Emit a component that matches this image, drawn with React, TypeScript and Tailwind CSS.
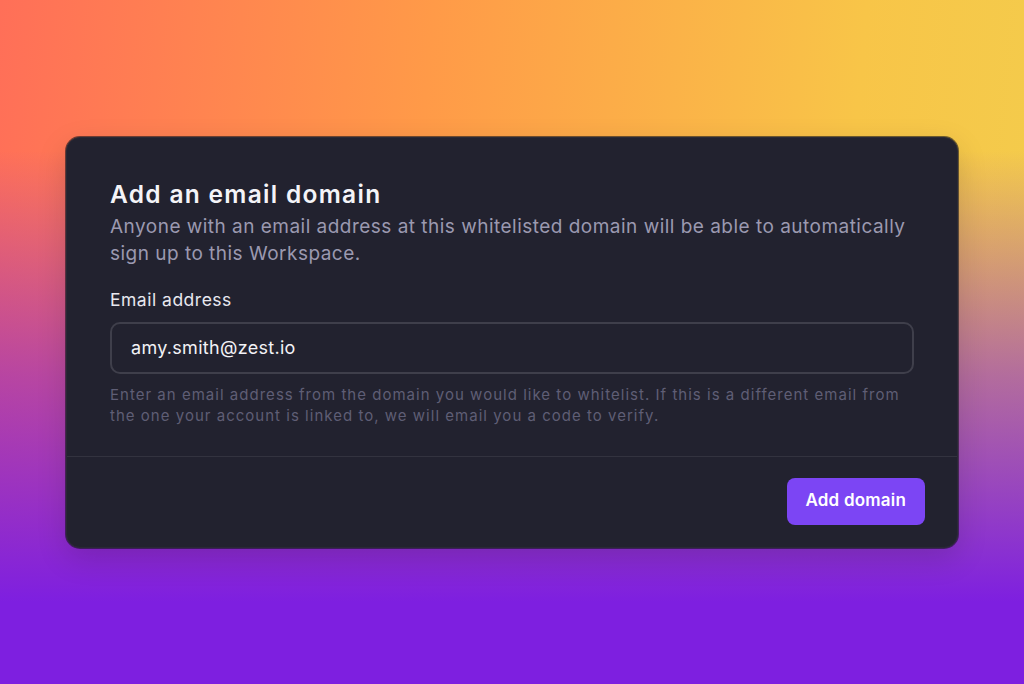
export default function App() {
  return (
    <div className="flex h-screen w-full items-center justify-center bg-[linear-gradient(180deg,rgba(125,31,224,0)_22%,rgba(125,31,224,0.55)_55%,#7e1fe0_88%),linear-gradient(95deg,#ff6f58_0%,#ff9a48_40%,#f8c548_80%,#f3cc4c_100%)] font-['Inter',sans-serif]">
      <div className="w-[892px] overflow-hidden rounded-[14px] border border-[#2a2a36] bg-[#22222f] shadow-[0_0_0_1px_rgba(20,20,28,0.6),0_10px_30px_rgba(0,0,0,0.15)]">
        <div className="px-[43px] pb-[30px] pt-[40px]">
          <h2 className="text-[24.5px] font-semibold leading-[32px] tracking-[1.3px] text-[#f4f4f8]">
            Add an email domain
          </h2>
          <p className="mt-[3px] text-[19px] leading-[27px] tracking-[0.48px] text-[#9b99b0]">
            Anyone with an email address at this whitelisted domain will be able to automatically sign up to this Workspace.
          </p>
          <label className="mt-[21px] block text-[17.5px] leading-[24px] tracking-[0.5px] text-[#e8e8ef]">Email address</label>
          <div className="mt-[10px] flex h-[52px] items-center rounded-[10px] border-2 border-[#3f3f4b] px-[19px] text-[18px] tracking-[0.3px] text-[#f2f2f6]">
            amy.smith@zest.io
          </div>
          <p className="mt-[10px] text-[15px] leading-[21px] tracking-[1.02px] text-[#5f5e75]">
            Enter an email address from the domain you would like to whitelist. If this is a different email from the one your account is linked to, we will email you a code to verify.
          </p>
        </div>
        <div className="flex justify-end border-t border-[#33333f] px-[32px] pb-[22px] pt-[21px]">
          <button className="h-[47px] rounded-[8px] bg-[#7c45f4] px-[19px] text-[17px] font-semibold tracking-[0.2px] text-white">
            Add domain
          </button>
        </div>
      </div>
    </div>
  );
}
